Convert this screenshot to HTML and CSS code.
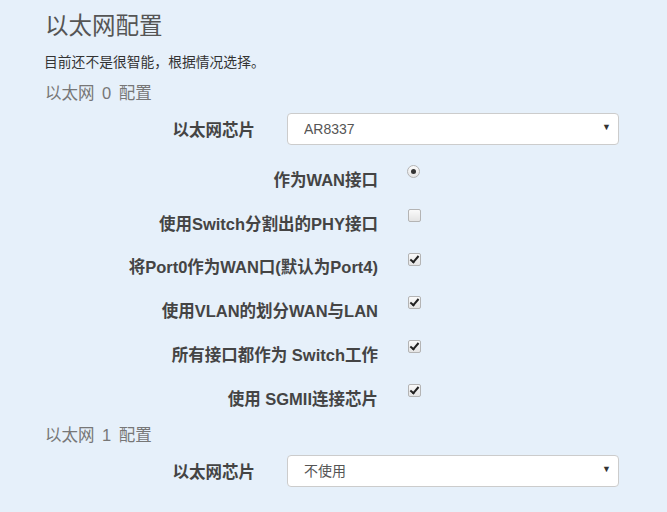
FILE: index.html
```html
<!DOCTYPE html>
<html lang="zh-CN">
<head>
    <meta charset="UTF-8">
    <meta name="viewport" content="width=device-width, initial-scale=1.0">
    <title>以太网配置</title>
    <link rel="stylesheet" href="styles.css">
</head>
<body>
    <div class="page">
        <h1 class="title">以太网配置</h1>
        <p class="desc">目前还不是很智能，根据情况选择。</p>

        <h3 class="section">以太网 0 配置</h3>
        <div class="select-row">
            <label class="select-label">以太网芯片</label>
            <div class="select-wrap">
                <select class="select">
                    <option>AR8337</option>
                    <option>不使用</option>
                </select>
            </div>
        </div>
        <div class="check-rows">
            <div class="check-row">
                <label class="check-label">作为WAN接口</label>
                <input type="radio" class="radio" name="wan" checked>
            </div>
            <div class="check-row">
                <label class="check-label">使用Switch分割出的PHY接口</label>
                <input type="checkbox" class="check">
            </div>
            <div class="check-row">
                <label class="check-label">将Port0作为WAN口(默认为Port4)</label>
                <input type="checkbox" class="check" checked>
            </div>
            <div class="check-row">
                <label class="check-label">使用VLAN的划分WAN与LAN</label>
                <input type="checkbox" class="check" checked>
            </div>
            <div class="check-row">
                <label class="check-label">所有接口都作为 Switch工作</label>
                <input type="checkbox" class="check" checked>
            </div>
            <div class="check-row">
                <label class="check-label">使用 SGMII连接芯片</label>
                <input type="checkbox" class="check" checked>
            </div>
        </div>

        <h3 class="section second">以太网 1 配置</h3>
        <div class="select-row">
            <label class="select-label">以太网芯片</label>
            <div class="select-wrap">
                <select class="select">
                    <option>不使用</option>
                    <option>AR8337</option>
                </select>
            </div>
        </div>
    </div>
</body>
</html>
```

FILE: styles.css
```css
body { margin: 0; background: #e6f0fa; font-family: "Liberation Sans", Arial, "Noto Sans CJK SC", sans-serif; color: #333; }
.page { padding: 9px 0 0 44px; width: 576px; }
.title { margin: 0; font-size: 23.5px; font-weight: normal; line-height: 34px; color: #555; padding-left: 1px; }
.desc { margin: 10px 0 0; font-size: 13.8px; line-height: 20px; color: #333; }
.section { margin: 8px 0 0; font-size: 16.5px; font-weight: normal; line-height: 24px; color: #777; padding-left: 1px; word-spacing: 3px; }
.section.second { margin-top: 3px; }
.select-row { display: flex; align-items: center; margin-top: 8px; height: 32px; }
.select-label { width: 211px; text-align: right; font-size: 16.5px; font-weight: bold; color: #444; }
.select-wrap { position: relative; margin-left: 32px; width: 332px; }
.select-wrap::after { content: "▼"; position: absolute; right: 8px; top: 9px; font-size: 9px; color: #333; pointer-events: none; }
.select { appearance: none; -webkit-appearance: none; display: block; width: 100%; height: 32px; padding: 0 16px; border: 1px solid #ccc; border-radius: 4px; background: #fff; font-family: inherit; font-size: 14px; color: #555; }
.check-rows { margin-top: 12px; }
.check-row { display: flex; height: 43.8px; align-items: center; }
.check-label { width: 334px; text-align: right; font-size: 16.5px; font-weight: bold; color: #444; }
.radio, .check { appearance: none; -webkit-appearance: none; position: relative; align-self: flex-start; margin: 8px 0 0 30px; width: 13px; height: 13px; border: 1px solid #b4b4b4; background: linear-gradient(#fafafa, #e4e4e4); box-sizing: border-box; }
.check { border-radius: 2px; }
.radio { border-radius: 50%; margin-left: 29px; }
.radio:checked::after { content: ""; position: absolute; left: 3px; top: 3px; width: 5px; height: 5px; border-radius: 50%; background: #333; }
.check:checked::after { content: ""; position: absolute; left: 3px; top: 0px; width: 3px; height: 7px; border: solid #222; border-width: 0 2px 2px 0; transform: rotate(40deg); }
```
